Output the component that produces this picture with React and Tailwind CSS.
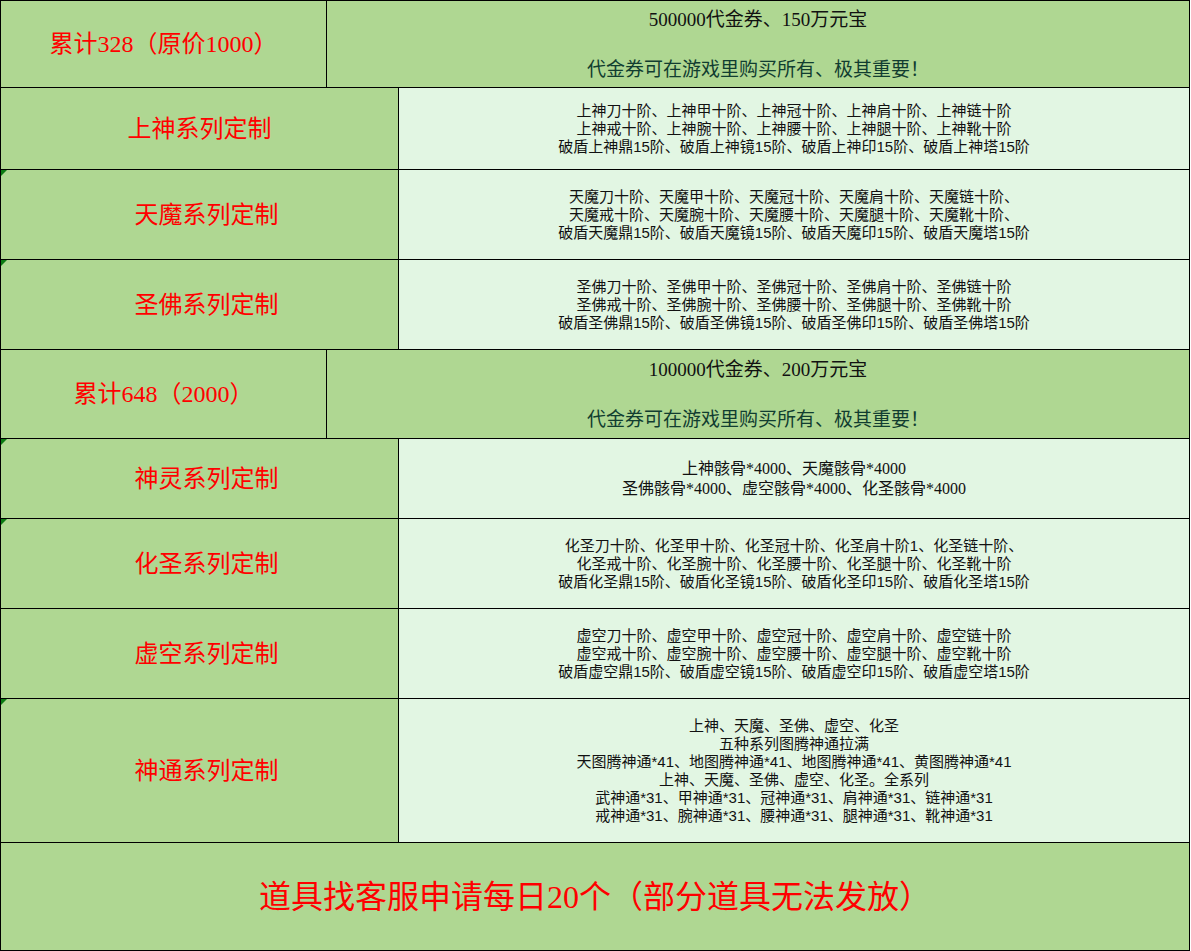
import React from "react";

const SERIF = { fontFamily: '"Liberation Serif", "Noto Sans CJK SC", serif' };
const SANS = { fontFamily: '"Liberation Sans", "Noto Sans CJK SC", sans-serif' };

function Mark() {
  return (
    <div className="absolute left-0 top-0 w-0 h-0 border-t-[6px] border-r-[6px] border-t-[#0b7a12] border-r-transparent" />
  );
}

function TopRow({ h, label, line1 }) {
  return (
    <div className={`flex border-b border-black bg-[#afd792] ${h}`}>
      <div className="w-[326px] shrink-0 border-r border-black flex items-center justify-center text-[24px] leading-[28px] text-[#ff0000]" style={SERIF}>
        {label}
      </div>
      <div className="flex-1 flex flex-col items-center justify-center text-[19px] leading-[25px]" style={SERIF}>
        <div className="text-[#111111]">{line1}</div>
        <div className="h-[25px]" />
        <div className="text-[#113d30]">代金券可在游戏里购买所有、极其重要！</div>
      </div>
    </div>
  );
}

function SeriesRow({ h, label, lines, mark, big, shift }) {
  return (
    <div className={`flex border-b border-black ${h}`}>
      <div
        className={`relative w-[398px] shrink-0 border-r border-black bg-[#afd792] flex items-center justify-center text-[24px] leading-[28px] text-[#ff0000] ${shift ? "pl-[14px]" : ""}`}
        style={SERIF}
      >
        {mark && <Mark />}
        {label}
      </div>
      <div
        className={`flex-1 bg-[#e2f6e3] flex flex-col items-center justify-center text-[#111111] ${big ? "text-[16px] leading-[20px]" : "text-[15px] leading-[18px]"}`}
        style={big ? SERIF : SANS}
      >
        {lines.map((l, i) => (
          <div key={i} className="whitespace-nowrap">{l}</div>
        ))}
      </div>
    </div>
  );
}

function tiers(p) {
  return [
    `${p}刀十阶、${p}甲十阶、${p}冠十阶、${p}肩十阶、${p}链十阶`,
    `${p}戒十阶、${p}腕十阶、${p}腰十阶、${p}腿十阶、${p}靴十阶`,
    `破盾${p}鼎15阶、破盾${p}镜15阶、破盾${p}印15阶、破盾${p}塔15阶`,
  ];
}

export default function App() {
  return (
    <div className="w-[1190px] h-[951px] border-t border-l border-r border-black bg-white flex flex-col">
      <TopRow h="h-[87px]" label="累计328（原价1000）" line1="500000代金券、150万元宝" />
      <SeriesRow h="h-[82px]" label="上神系列定制" lines={tiers("上神")} />
      <SeriesRow
        h="h-[90px]"
        mark
        shift
        label="天魔系列定制"
        lines={[
          "天魔刀十阶、天魔甲十阶、天魔冠十阶、天魔肩十阶、天魔链十阶、",
          "天魔戒十阶、天魔腕十阶、天魔腰十阶、天魔腿十阶、天魔靴十阶、",
          "破盾天魔鼎15阶、破盾天魔镜15阶、破盾天魔印15阶、破盾天魔塔15阶",
        ]}
      />
      <SeriesRow h="h-[90px]" mark shift label="圣佛系列定制" lines={tiers("圣佛")} />
      <TopRow h="h-[89px]" label="累计648（2000）" line1="100000代金券、200万元宝" />
      <SeriesRow
        h="h-[80px]"
        mark
        shift
        big
        label="神灵系列定制"
        lines={["上神骸骨*4000、天魔骸骨*4000", "圣佛骸骨*4000、虚空骸骨*4000、化圣骸骨*4000"]}
      />
      <SeriesRow
        h="h-[90px]"
        mark
        shift
        label="化圣系列定制"
        lines={[
          "化圣刀十阶、化圣甲十阶、化圣冠十阶、化圣肩十阶1、化圣链十阶、",
          "化圣戒十阶、化圣腕十阶、化圣腰十阶、化圣腿十阶、化圣靴十阶",
          "破盾化圣鼎15阶、破盾化圣镜15阶、破盾化圣印15阶、破盾化圣塔15阶",
        ]}
      />
      <SeriesRow h="h-[90px]" shift label="虚空系列定制" lines={tiers("虚空")} />
      <SeriesRow
        h="h-[144px]"
        mark
        shift
        label="神通系列定制"
        lines={[
          "上神、天魔、圣佛、虚空、化圣",
          "五种系列图腾神通拉满",
          "天图腾神通*41、地图腾神通*41、地图腾神通*41、黄图腾神通*41",
          "上神、天魔、圣佛、虚空、化圣。全系列",
          "武神通*31、甲神通*31、冠神通*31、肩神通*31、链神通*31",
          "戒神通*31、腕神通*31、腰神通*31、腿神通*31、靴神通*31",
        ]}
      />
      <div className="h-[108px] border-b border-black bg-[#afd792] flex items-center justify-center text-[32px] leading-[36px] text-[#ff0000]" style={SERIF}>
        道具找客服申请每日20个（部分道具无法发放）
      </div>
    </div>
  );
}
